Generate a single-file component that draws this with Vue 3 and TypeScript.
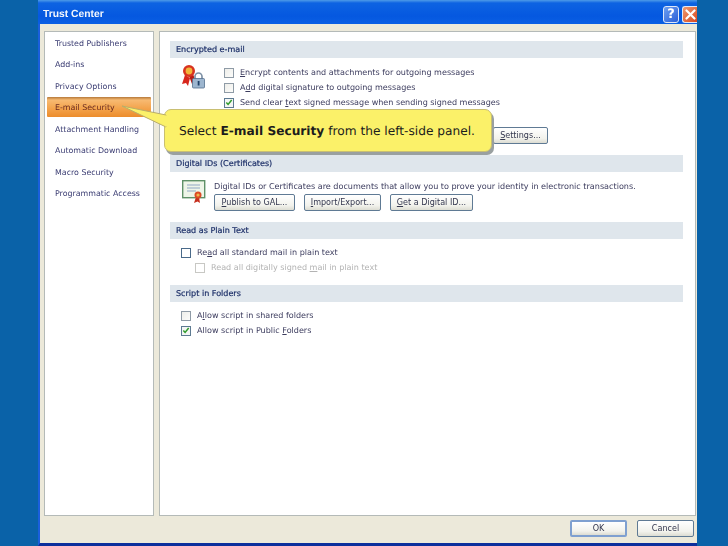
<script setup lang="ts">
const navItems: string[] = [
  'Trusted Publishers',
  'Add-ins',
  'Privacy Options',
  'E-mail Security',
  'Attachment Handling',
  'Automatic Download',
  'Macro Security',
  'Programmatic Access'
]
</script>

<template>
  <div class="page">
    <div class="dialog">
      <header class="titlebar">
        <span class="title">Trust Center</span>
        <div class="winbtns">
          <span class="winbtn help">?</span>
          <span class="winbtn close">
            <svg width="11" height="11" viewBox="0 0 11 11"><path d="M1.5 1.5l8 8M9.5 1.5l-8 8" stroke="#fff" stroke-width="2.2" stroke-linecap="round" /></svg>
          </span>
        </div>
      </header>

      <div class="body">
        <nav class="sidebar">
          <div v-for="item in navItems" :key="item" class="nav-item" :class="{ active: item === 'E-mail Security' }">{{ item }}</div>
        </nav>

        <main class="main">
          <section class="sec sec-mail">
            <h2 class="head">Encrypted e-mail</h2>
            <div class="mail-body">
              <svg class="ico-seal" width="24" height="26" viewBox="0 0 24 26">
                <path d="M4 11 L1 20 L5 19 L7 22 L9 14Z" fill="#d7261c" />
                <path d="M8 12 L11 20 L13 17 L15 18 L12 10Z" fill="#b81d14" />
                <circle cx="8" cy="7" r="6" fill="#d8331f" />
                <circle cx="8" cy="7" r="3.4" fill="#f2b53a" />
                <path d="M14 15v-2.5a3.5 3.5 0 0 1 7 0V15" fill="none" stroke="#7f92a6" stroke-width="1.7" />
                <rect x="11.5" y="14.5" width="12" height="9.5" rx="1" fill="#9db6cf" stroke="#54708e" stroke-width=".8" />
                <rect x="16.7" y="17" width="1.8" height="4.5" fill="#1f3f66" />
              </svg>
              <div class="mail-opts">
                <label class="opt"><span class="cb"></span><span><u>E</u>ncrypt contents and attachments for outgoing messages</span></label>
                <label class="opt"><span class="cb"></span><span>A<u>d</u>d digital signature to outgoing messages</span></label>
                <label class="opt"><span class="cb on"><svg width="9" height="9" viewBox="0 0 9 9"><path d="M1.5 4.5l2 2.2L7.5 1.8" fill="none" stroke="#2f9b2a" stroke-width="1.7" /></svg></span><span>Send clear <u>t</u>ext signed message when sending signed messages</span></label>
              </div>
            </div>
            <div class="settings-row"><button class="btn settings"><u>S</u>ettings...</button></div>
          </section>

          <section class="sec sec-ids">
            <h2 class="head">Digital IDs (Certificates)</h2>
            <div class="ids-body">
              <svg class="ico-cert" width="24" height="24" viewBox="0 0 24 24">
                <rect x=".7" y=".7" width="22" height="17" fill="#eef5e8" stroke="#5f9168" stroke-width="1.4" />
                <path d="M5 5h13M5 8h13M5 11h9" stroke="#8fa7c4" stroke-width="1.1" />
                <path d="M14 17l-2 6 3.5-1.500L18 23l-1-6Z" fill="#c62f1e" />
                <circle cx="16" cy="15" r="3.5" fill="#db4a25" />
                <circle cx="16" cy="15" r="1.6" fill="#f1b64b" />
              </svg>
              <div class="ids-main">
                <p class="ids-text">Digital IDs or Certificates are documents that allow you to prove your identity in electronic transactions.</p>
                <div class="ids-btns">
                  <button class="btn b1"><u>P</u>ublish to GAL...</button>
                  <button class="btn b2"><u>I</u>mport/Export...</button>
                  <button class="btn b3"><u>G</u>et a Digital ID...</button>
                </div>
              </div>
            </div>
          </section>

          <section class="sec sec-plain">
            <h2 class="head">Read as Plain Text</h2>
            <div class="plain-body">
              <label class="opt"><span class="cb strong"></span><span>Re<u>a</u>d all standard mail in plain text</span></label>
              <label class="opt sub"><span class="cb off"></span><span>Read all digitally signed <u>m</u>ail in plain text</span></label>
            </div>
          </section>

          <section class="sec sec-script">
            <h2 class="head">Script in Folders</h2>
            <div class="plain-body">
              <label class="opt"><span class="cb"></span><span>A<u>l</u>low script in shared folders</span></label>
              <label class="opt"><span class="cb on"><svg width="9" height="9" viewBox="0 0 9 9"><path d="M1.5 4.5l2 2.2L7.5 1.8" fill="none" stroke="#2f9b2a" stroke-width="1.7" /></svg></span><span>Allow script in Public <u>F</u>olders</span></label>
            </div>
          </section>
        </main>
      </div>

      <footer class="footer">
        <button class="btn foot ok">OK</button>
        <button class="btn foot">Cancel</button>
      </footer>
    </div>

    <div class="callout">
      <svg class="tail" width="48" height="30" viewBox="0 0 48 30">
        <path d="M0 1 L44 10 L44 22Z" fill="#fbf169" stroke="#b9ad6a" stroke-width="1" stroke-linejoin="round" />
        <path d="M43 10.5 H45 V21.5 H43Z" fill="#fbf169" />
      </svg>
      <span class="callout-text">Select <b>E-mail Security</b> from the left-side panel.</span>
    </div>
  </div>
</template>

<style scoped>
.page {
  position: relative;
  width: 728px;
  height: 546px;
  overflow: hidden;
  padding-left: 38px;
  box-sizing: border-box;
  background: #0a62a8;
  font-family: "DejaVu Sans", sans-serif;
  text-rendering: geometricPrecision;
}
.dialog {
  width: 659px;
  height: 546px;
  box-sizing: border-box;
  display: flex;
  flex-direction: column;
  background: #ece9da;
  border-left: 2px solid #1a5fdc;
  border-bottom: 3px solid #0c2f9c;
  filter: blur(0.35px);
}
.titlebar {
  height: 24px;
  flex: none;
  margin-left: -2px;
  padding: 0 0 0 5px;
  display: flex;
  align-items: center;
  justify-content: space-between;
  background: linear-gradient(#4e9be8 0, #0d63e2 3px, #0558e0 16px, #0a5fe4 100%);
}
.title {
  color: #f2f6fc;
  font-family: "Liberation Sans", sans-serif;
  font-size: 10.3px;
  font-weight: 700;
  padding-top: 4px;
}
.winbtns {
  display: flex;
  gap: 3px;
  padding-top: 4px;
}
.winbtn {
  width: 16px;
  height: 17px;
  box-sizing: border-box;
  border: 1px solid #dfe8f8;
  border-radius: 3px;
  color: #fff;
  font-weight: 700;
  font-size: 13px;
  display: flex;
  align-items: center;
  justify-content: center;
}
.help { background: linear-gradient(135deg, #6d9ff0, #2a5fd8); }
.close {
  background: linear-gradient(135deg, #ee9a70, #d9481f);
  border-right: 0;
  border-radius: 3px 0 0 3px;
  width: 15px;
}
.body {
  flex: none;
  height: 485px;
  margin-top: 7px;
  padding-left: 4px;
  display: flex;
  gap: 5px;
}
.sidebar {
  width: 110px;
  height: 485px;
  box-sizing: border-box;
  padding: 0.5px 2px 0;
  background: #fff;
  border: 1px solid #b4bab8;
}
.nav-item {
  height: 21.5px;
  line-height: 21.5px;
  padding-left: 8px;
  font-size: 7.9px;
  color: #3a3c72;
  white-space: nowrap;
}
.nav-item.active {
  height: 19.5px;
  line-height: 21px;
  margin-bottom: 2px;
  background: linear-gradient(#b5793a 0, #f7ba72 3px, #f3a24a 12px, #ec8c2c 100%);
  color: #6a2a20;
  border-radius: 1px;
}
.main {
  width: 537px;
  height: 485px;
  box-sizing: border-box;
  padding: 9px 12px 0 10px;
  background: #fff;
  border: 1px solid #b4bab8;
}
.head {
  margin: 0;
  height: 17px;
  line-height: 17px;
  padding-left: 6px;
  font-size: 8.05px;
  font-weight: 400;
  color: #1c2f68;
  background: #dfe6ec;
  -webkit-text-stroke: 0.2px #1c2f68;
}
.sec-mail { height: 114px; }
.sec-ids { height: 67px; }
.sec-plain { height: 63px; }
.mail-body {
  display: flex;
  padding: 7px 0 0 11px;
}
.ico-seal { margin-right: 19px; flex: none; margin-top: -1px; }
.mail-opts { display: flex; flex-direction: column; }
.opt {
  display: flex;
  align-items: center;
  height: 15px;
  gap: 6px;
  font-size: 8.06px;
  color: #3c3c5e;
  white-space: nowrap;
}
.cb {
  flex: none;
  width: 10px;
  height: 10px;
  box-sizing: border-box;
  border: 1px solid #8f9ba6;
  background: linear-gradient(135deg, #eeeeea, #fcfcfa);
  display: flex;
  align-items: center;
  justify-content: center;
}
.cb.on { border-color: #5d7a92; background: #f4f6f4; }
.cb.strong { border-color: #4a6a8a; background: #fff; }
.cb.off { border-color: #c8c8c4; background: #fff; }
.sub { margin-left: 14px; color: #b3b3b3; }
.settings-row {
  padding: 13px 0 0 323px;
}
.btn {
  height: 17px;
  padding: 0;
  box-sizing: border-box;
  border: 1px solid #5f7a94;
  border-radius: 2px;
  background: linear-gradient(#fff, #f2f2ec 70%, #dcdcd2);
  font-family: "DejaVu Sans", sans-serif;
  font-size: 8.06px;
  color: #33364e;
  white-space: nowrap;
}
.settings { width: 55px; }
.ids-body {
  display: flex;
  padding: 8px 0 0 12px;
}
.ico-cert { flex: none; margin-right: 8px; }
.ids-text {
  margin: 0 0 1px;
  height: 13px;
  line-height: 13px;
  font-size: 8.09px;
  color: #3c3c5e;
  white-space: nowrap;
}
.ids-btns { display: flex; gap: 9px; }
.b1 { width: 81px; }
.b2 { width: 77px; }
.b3 { width: 83px; }
.plain-body {
  padding: 6px 0 0 11px;
}
.footer {
  flex: 1;
  display: flex;
  justify-content: flex-end;
  gap: 10px;
  padding: 4px 3px 0 0;
}
.foot {
  width: 57px;
  height: 17px;
}
.ok { border: 2px solid #7fa0d0; }
.callout {
  position: absolute;
  left: 164px;
  top: 109px;
  width: 328px;
  height: 43px;
  box-sizing: border-box;
  padding-left: 14px;
  display: flex;
  align-items: center;
  background: #fbf169;
  border: 1px solid #c9bf72;
  border-radius: 7px;
  box-shadow: 2px 3px 0 #9aa0a0;
  font-size: 12.2px;
  color: #1c1c1c;
}
.callout-text { white-space: nowrap; }
.callout b { font-weight: 700; }
.tail {
  position: absolute;
  left: -43px;
  top: -5px;
}
</style>
